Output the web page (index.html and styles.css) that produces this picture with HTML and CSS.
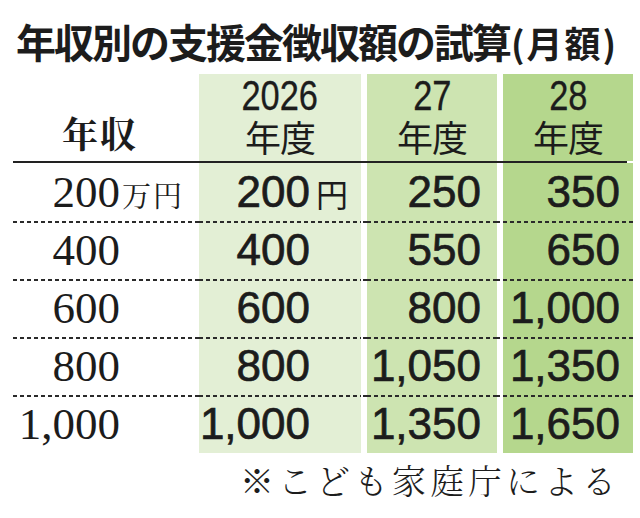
FILE: index.html
```html
<!DOCTYPE html>
<html lang="ja">
<head>
<meta charset="utf-8">
<title>年収別の支援金徴収額の試算</title>
<link rel="stylesheet" href="styles.css">
</head>
<body>
<div class="figure">
  <h1 class="title">年収別の支援金徴収額の試算<span class="title-sub">(月額)</span></h1>
  <div class="table">
    <div class="row head">
      <div class="cell label-head">年収</div>
      <div class="cell c1"><span class="year">2026</span><span class="fy">年度</span></div>
      <div class="cell c2"><span class="year">27</span><span class="fy">年度</span></div>
      <div class="cell c3"><span class="year">28</span><span class="fy">年度</span></div>
    </div>
    <div class="body">
      <div class="row">
        <div class="cell label">200<span class="unit">万円</span></div>
        <div class="cell c1 val">200<span class="yen">円</span></div>
        <div class="cell c2 val">250</div>
        <div class="cell c3 val">350</div>
      </div>
      <div class="row">
        <div class="cell label">400<span class="unit ghost">万円</span></div>
        <div class="cell c1 val">400<span class="yen ghost">円</span></div>
        <div class="cell c2 val">550</div>
        <div class="cell c3 val">650</div>
      </div>
      <div class="row">
        <div class="cell label">600<span class="unit ghost">万円</span></div>
        <div class="cell c1 val">600<span class="yen ghost">円</span></div>
        <div class="cell c2 val">800</div>
        <div class="cell c3 val">1,000</div>
      </div>
      <div class="row">
        <div class="cell label">800<span class="unit ghost">万円</span></div>
        <div class="cell c1 val">800<span class="yen ghost">円</span></div>
        <div class="cell c2 val">1,050</div>
        <div class="cell c3 val">1,350</div>
      </div>
      <div class="row">
        <div class="cell label">1,000<span class="unit ghost">万円</span></div>
        <div class="cell c1 val">1,000<span class="yen ghost">円</span></div>
        <div class="cell c2 val">1,350</div>
        <div class="cell c3 val">1,650</div>
      </div>
    </div>
  </div>
  <p class="note">※こども家庭庁による</p>
</div>
</body>
</html>
```

FILE: styles.css
```css
:root {
  --ink: #1c1c1c;
  --g1: #e3efd5;
  --g2: #cde4b1;
  --g3: #b5d78d;
  --dots: repeating-linear-gradient(to right, #2a2a2a 0 4px, transparent 4px 7px);
  --sans-jp: "Noto Sans CJK JP", "Noto Sans", sans-serif;
  --serif-jp: "Noto Serif CJK JP", "Noto Sans CJK JP", serif;
}

html, body {
  margin: 0;
  padding: 0;
  background: #ffffff;
  color: var(--ink);
}

.figure {
  width: 640px;
  height: 518px;
  overflow: hidden;
}

.title {
  margin: 0;
  padding: 17px 0 0 16px;
  height: 48px;
  font-family: var(--sans-jp);
  font-weight: 700;
  font-size: 40px;
  line-height: 48px;
  letter-spacing: -2px;
  white-space: nowrap;
}

.title-sub {
  font-size: 36px;
  letter-spacing: 2px;
  margin-left: 1px;
}

.table {
  margin: 9px 0 0 13px;
  width: 614px;
}

.row {
  display: grid;
  grid-template-columns: 180px 162px 130px 130px;
  column-gap: 6px;
}

.c1 { --bg: var(--g1); background: var(--g1); }
.c2 { --bg: var(--g2); background: var(--g2); }
.c3 { --bg: var(--g3); background: var(--g3); }

/* header */
.head {
  height: 87px;
  border-bottom: 2px solid #222;
}

.head .cell {
  display: flex;
  flex-direction: column;
  align-items: center;
  justify-content: flex-end;
  padding-bottom: 3px;
}

.year {
  display: block;
  font-family: "Liberation Sans", Arial, sans-serif;
  font-size: 42px;
  line-height: 36px;
  transform: scaleX(0.82);
  -webkit-text-stroke: 0.3px var(--ink);
}

.fy {
  display: block;
  font-family: var(--sans-jp);
  font-size: 36px;
  line-height: 44px;
  letter-spacing: -1px;
}

.label-head {
  font-family: var(--serif-jp);
  font-weight: 700;
  font-size: 36px;
  line-height: 44px;
  letter-spacing: 2px;
  padding-bottom: 6px !important;
  padding-right: 6px;
}

/* data rows */
.body .row {
  height: 58px;
}

.body .row + .row {
  background: var(--dots) top left / 100% 2px no-repeat;
}

.body .row + .row .cell {
  background: var(--dots) top left / 100% 2px no-repeat, var(--bg, transparent);
}

.body .cell {
  text-align: right;
  line-height: 58px;
  white-space: nowrap;
}

.label {
  font-family: "Liberation Serif", "Times New Roman", serif;
  font-size: 45px;
  padding-right: 8px;
}

.unit {
  display: inline-block;
  width: 65px;
  text-align: left;
  padding-left: 2px;
  box-sizing: border-box;
  font-family: var(--serif-jp);
  font-size: 29px;
  line-height: 1;
  letter-spacing: 2px;
}

.val {
  font-family: "Liberation Sans", Arial, sans-serif;
  font-size: 44px;
  letter-spacing: 0;
  -webkit-text-stroke: 0.7px var(--ink);
}

.c1.val { padding-right: 13px; }
.c2.val { padding-right: 16px; }
.c3.val { padding-right: 13px; }

.yen {
  display: inline-block;
  width: 38px;
  text-align: right;
  font-family: var(--sans-jp);
  font-size: 32px;
  line-height: 1;
  letter-spacing: 0;
  -webkit-text-stroke: 0;
}

.ghost {
  visibility: hidden;
}

.note {
  margin: 5px 0 0 0;
  padding-right: 20px;
  text-align: right;
  font-family: var(--serif-jp);
  font-weight: 300;
  font-size: 34px;
  line-height: 43px;
  letter-spacing: 4px;
  white-space: nowrap;
}
```
